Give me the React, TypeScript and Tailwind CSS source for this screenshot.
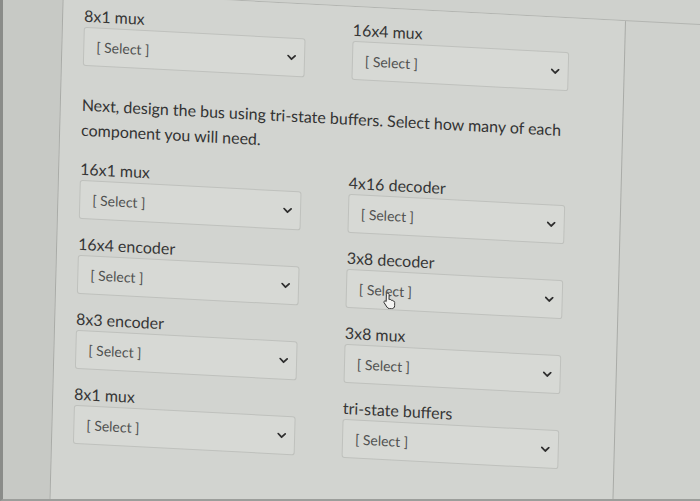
import React from "react";

type DropdownProps = {
  label: string;
  hovered?: boolean;
};

function Chevron() {
  return (
    <svg width="9" height="6" viewBox="0 0 9 6" className="shrink-0">
      <polyline
        points="1,1 4.5,4.5 8,1"
        fill="none"
        stroke="#2e2e2e"
        strokeWidth="1.8"
        strokeLinecap="round"
        strokeLinejoin="round"
      />
    </svg>
  );
}

// pointer hand that sits over a select while it is hovered
function HandCursor() {
  return (
    <svg
      width="13"
      height="17"
      viewBox="0 0 12 16"
      className="absolute left-[36px] top-[20px]"
    >
      <path
        d="M4.5 1 C5.3 1 5.8 1.5 5.8 2.3 V7 L6.5 6.8 C7.3 6.7 7.8 7 8 7.6 C8.8 7.3 9.6 7.6 9.8 8.3 C10.6 8.1 11.3 8.6 11.3 9.4 V12.5 C11.3 14.3 10 15.5 8.3 15.5 H6.5 C5.4 15.5 4.6 15 4 14.1 L1.3 10.2 C0.9 9.6 1.1 8.9 1.7 8.6 C2.2 8.3 2.8 8.5 3.2 9 V2.3 C3.2 1.5 3.7 1 4.5 1 Z"
        fill="#f4f4f2"
        stroke="#2a2a2a"
        strokeWidth="0.9"
      />
    </svg>
  );
}

function Dropdown({ label, hovered }: DropdownProps) {
  return (
    <div className="flex flex-col">
      <span className="text-[16px] leading-[20px] text-[#363636] whitespace-nowrap">
        {label}
      </span>
      <div className="relative mt-px h-[39px] flex items-center justify-between pl-3 pr-2 rounded-[3px] border border-[#bfc1bd] bg-[#d7d9d5]">
        <span className="text-[14px] text-[#505150]">[ Select ]</span>
        <Chevron />
        {hovered && <HandCursor />}
      </div>
    </div>
  );
}

const rows: [string, string][] = [
  ["16x1 mux", "4x16 decoder"],
  ["16x4 encoder", "3x8 decoder"],
  ["8x3 encoder", "3x8 mux"],
  ["8x1 mux", "tri-state buffers"],
];

export default function App() {
  return (
    <div className="w-[700px] h-[501px] overflow-hidden bg-[#c6c8c4] border-l-[3px] border-b-[2px] border-l-[#8a8c89] border-b-[#9c9e9b]">
      <div className="-ml-[19px] -mt-6 w-[732px] h-[548px] flex flex-col bg-[#cfd1cd] skew-x-[-1.5deg] skew-y-3 font-[Lato,sans-serif]">
        <div className="h-[31px] shrink-0 border-b border-[#b3b5b1]" />
        <div className="flex flex-1">
          <div className="w-[72px] shrink-0 bg-[#c7c9c5]" />
          <div className="w-[564px] shrink-0 border-x border-[#a9aba7] bg-[#d2d4d0] pl-[21px] pt-[13px]">
            <div className="grid grid-cols-[222px_217px] gap-x-[47px]">
              <Dropdown label="8x1 mux" />
              <Dropdown label="16x4 mux" />
            </div>

            <p className="mt-[26px] w-[510px] text-[16px] leading-[25px] text-[#333333]">
              Next, design the bus using tri-state buffers. Select how many of
              each component you will need.
            </p>

            <div className="mt-[17px] grid grid-cols-[222px_217px] gap-x-[47px] gap-y-[15px]">
              {rows.map(([l, r]) => (
                <React.Fragment key={l}>
                  <Dropdown label={l} />
                  <Dropdown label={r} hovered={r === "3x8 decoder"} />
                </React.Fragment>
              ))}
            </div>
          </div>
          <div className="flex-1" />
        </div>
      </div>
    </div>
  );
}
